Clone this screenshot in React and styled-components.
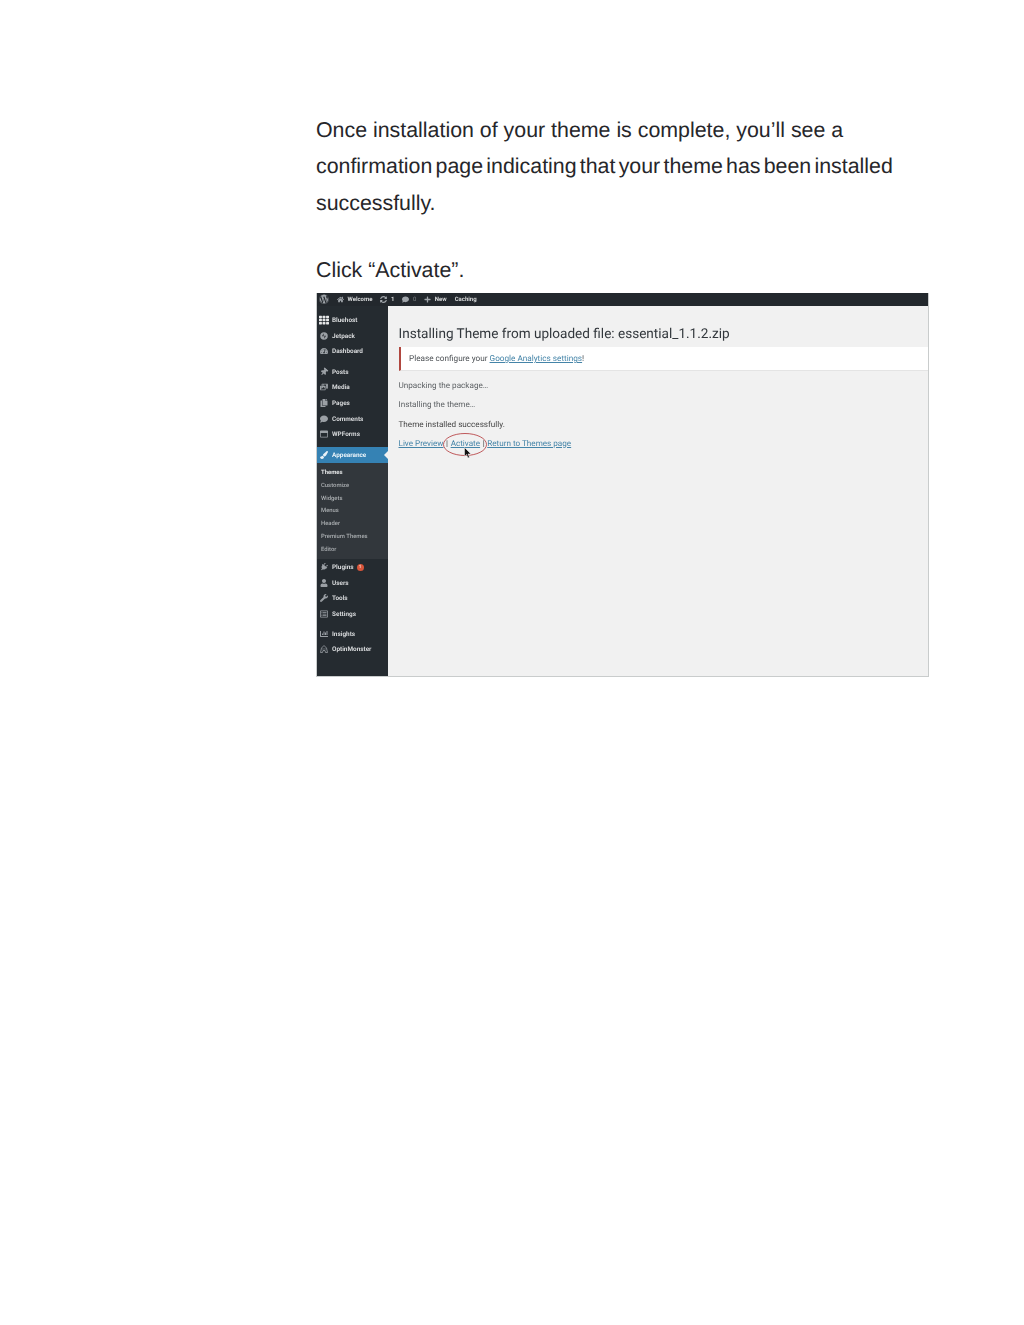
import React from "react";
import styled, { createGlobalStyle } from "styled-components";
import {
  FaWordpress,
  FaHome,
  FaSyncAlt,
  FaComment,
  FaPlus,
  FaTh,
  FaTachometerAlt,
  FaThumbtack,
  FaPhotoVideo,
  FaCopy,
  FaRegWindowMaximize,
  FaPaintBrush,
  FaPlug,
  FaUser,
  FaWrench,
  FaRegListAlt,
  FaChartBar,
} from "react-icons/fa";

const GlobalStyle = createGlobalStyle`
  html, body {
    margin: 0;
    padding: 0;
    background: #fff;
  }
`;

const Page = styled.div`
  width: 1024px;
  height: 1325px;
  box-sizing: border-box;
  padding: 111.9px 0 0 316px;
  overflow: hidden;
  text-rendering: geometricPrecision;
`;

const Line = styled.p`
  margin: 0;
  height: 36.5px;
  font: 21.36px/36.5px "Liberation Sans", Arial, sans-serif;
  color: #26262a;
  white-space: nowrap;
  word-spacing: ${(p) => p.$wordSpacing || "0"};
`;

const Spaced = styled(Line)`
  margin: 30.4px 0 4.7px;
`;

const Shot = styled.div`
  width: 613px;
  height: 384px;
  box-sizing: border-box;
  border: 1px solid #c9cccc;
  border-top: 0;
  display: flex;
  flex-direction: column;
  background: #f1f1f1;
  font-family: Roboto, "Liberation Sans", sans-serif;
  filter: blur(0.45px);
`;

const TopBar = styled.div`
  height: 13px;
  flex: none;
  background: #23282d;
  display: flex;
  align-items: center;
  gap: 8px;
  padding-left: 2px;
  color: #d8dadb;
  font-size: 6px;
  font-weight: 700;
`;

const TopItem = styled.span`
  display: flex;
  align-items: center;
  gap: 3.5px;
  svg {
    color: #a0a5aa;
    font-size: ${(p) => p.$icon || "7px"};
  }
`;

const Count = styled.span`
  color: ${(p) => (p.$dim ? "#7d8387" : "#d8dadb")};
  font-weight: 400;
`;

const Body = styled.div`
  flex: 1;
  display: flex;
  min-height: 0;
`;

const Sidebar = styled.div`
  width: 71px;
  flex: none;
  background: #252b30;
  padding-top: 6.3px;
  box-sizing: border-box;
`;

const Group = styled.div`
  margin-top: ${(p) => p.$top || "0"};
`;

const MenuRow = styled.div`
  position: relative;
  height: 15.6px;
  display: flex;
  align-items: center;
  padding-left: 3px;
  gap: 4px;
  font-size: 6.4px;
  font-weight: 700;
  color: ${(p) => (p.$active ? "#e8f2f8" : "#d6d8da")};
  background: ${(p) => (p.$active ? "#3582b4" : "transparent")};
  svg {
    width: 8px;
    height: 8px;
    flex: none;
    color: ${(p) => (p.$active ? "#e8f2f8" : "#9ba0a5")};
    transform: ${(p) => (p.$tilt ? "rotate(40deg)" : "none")};
  }
`;

const BluehostRow = styled(MenuRow)`
  padding-left: 2px;
  gap: 3px;
  svg {
    width: 10px;
    height: 10px;
    color: #e6e8e9;
  }
`;

const ActiveNotch = styled.span`
  position: absolute;
  right: 0;
  top: 4px;
  border: 4px solid transparent;
  border-right-color: #f1f1f1;
  border-left-width: 0;
`;

const SubMenu = styled.div`
  background: #32373c;
  padding: 4.2px 0 2.3px;
`;

const SubRow = styled.div`
  height: 12.9px;
  line-height: 12.9px;
  padding-left: 4px;
  font-size: 5.9px;
  font-weight: ${(p) => (p.$current ? 700 : 500)};
  color: ${(p) => (p.$current ? "#e4e6e7" : "#a9adb0")};
`;

const Badge = styled.span`
  width: 7px;
  height: 7px;
  margin-left: -1px;
  border-radius: 50%;
  background: #d8553a;
  color: #f6d9d0;
  font-size: 4.5px;
  line-height: 7px;
  text-align: center;
`;

const Content = styled.div`
  flex: 1;
  padding-top: 19px;
  color: #444;
`;

const Title = styled.h1`
  margin: 0 0 3px 10.5px;
  font-size: 13.57px;
  line-height: 19px;
  font-weight: 400;
  color: #32373c;
  white-space: nowrap;
`;

const Notice = styled.div`
  height: 24px;
  box-sizing: border-box;
  margin-left: 10.5px;
  padding: 1px 0 0 8.5px;
  display: flex;
  align-items: center;
  background: #fff;
  border-left: 2px solid #b0473f;
  border-bottom: 1px solid #e4e4e4;
  font-size: 8.2px;
  color: #4c5054;
`;

const Log = styled.div`
  margin: 9px 0 0 10.5px;
  display: flex;
  flex-direction: column;
  gap: 9.3px;
  font-size: 8.15px;
  line-height: 10px;
`;

const LogLine = styled.div`
  color: ${(p) => p.$color || "#5d6164"};
`;

const Anchor = styled.a`
  color: #4484a8;
  text-decoration: underline;
`;

const Links = styled.div`
  position: relative;
  display: flex;
  color: #444;
  white-space: nowrap;
`;

const Separator = styled.span`
  margin: 0 2.6px;
`;

const Circle = styled.svg`
  position: absolute;
  left: 43px;
  top: -6px;
  width: 46px;
  height: 25px;
`;

const Pointer = styled.svg`
  position: absolute;
  left: 65.5px;
  top: 9px;
  width: 8px;
  height: 12px;
`;

const JetpackIcon = () => (
  <svg viewBox="0 0 16 16">
    <circle cx="8" cy="8" r="7.5" fill="currentColor" />
    <path d="M7.3 2.5v6H4zM8.7 13.5v-6H12z" fill="#23282d" />
  </svg>
);

const MonsterIcon = () => (
  <svg viewBox="0 0 16 16">
    <path
      d="M1 15 3 6l5-5 5 5 2 9h-4l-1-4H6l-1 4z"
      fill="none"
      stroke="currentColor"
      strokeWidth="1.6"
    />
    <path d="M5 7h2v2H5zM9 7h2v2H9z" fill="currentColor" />
  </svg>
);

const top = [
  { label: "Jetpack", icon: JetpackIcon },
  { label: "Dashboard", icon: FaTachometerAlt },
];
const content = [
  { label: "Posts", icon: FaThumbtack, tilt: true },
  { label: "Media", icon: FaPhotoVideo },
  { label: "Pages", icon: FaCopy },
  { label: "Comments", icon: FaComment },
  { label: "WPForms", icon: FaRegWindowMaximize },
];
const subItems = ["Customize", "Widgets", "Menus", "Header", "Premium Themes", "Editor"];
const admin = [
  { label: "Users", icon: FaUser },
  { label: "Tools", icon: FaWrench },
  { label: "Settings", icon: FaRegListAlt },
];
const extras = [
  { label: "Insights", icon: FaChartBar },
  { label: "OptinMonster", icon: MonsterIcon },
];

const Rows = ({ items }) =>
  items.map(({ label, icon: Icon, tilt }) => (
    <MenuRow key={label} $tilt={tilt}>
      <Icon />
      {label}
    </MenuRow>
  ));

export default function App() {
  return (
    <>
      <GlobalStyle />
      <Page>
        <Line>Once installation of your theme is complete, you’ll see a</Line>
        <Line $wordSpacing="-2.7px">confirmation page indicating that your theme has been installed</Line>
        <Line>successfully.</Line>
        <Spaced>Click “Activate”.</Spaced>
        <Shot>
          <TopBar>
            <TopItem $icon="10px"><FaWordpress /></TopItem>
            <TopItem><FaHome />Welcome</TopItem>
            <TopItem><FaSyncAlt />1</TopItem>
            <TopItem><FaComment /><Count $dim>0</Count></TopItem>
            <TopItem><FaPlus />New</TopItem>
            <TopItem>Caching</TopItem>
          </TopBar>
          <Body>
            <Sidebar>
              <BluehostRow>
                <FaTh />
                Bluehost
              </BluehostRow>
              <Rows items={top} />
              <Group $top="5px"><Rows items={content} /></Group>
              <Group $top="5px">
                <MenuRow $active>
                  <FaPaintBrush />
                  Appearance
                  <ActiveNotch />
                </MenuRow>
                <SubMenu>
                  <SubRow $current>Themes</SubRow>
                  {subItems.map((item) => (
                    <SubRow key={item}>{item}</SubRow>
                  ))}
                </SubMenu>
              </Group>
              <MenuRow $tilt>
                <FaPlug />
                Plugins
                <Badge>1</Badge>
              </MenuRow>
              <Rows items={admin} />
              <Group $top="4.4px"><Rows items={extras} /></Group>
            </Sidebar>
            <Content>
              <Title>Installing Theme from uploaded file: essential_1.1.2.zip</Title>
              <Notice>
                <span>Please configure your <Anchor>Google Analytics settings</Anchor>!</span>
              </Notice>
              <Log>
                <LogLine>Unpacking the package…</LogLine>
                <LogLine>Installing the theme…</LogLine>
                <LogLine $color="#444">Theme installed successfully.</LogLine>
                <Links>
                  <Anchor>Live Preview</Anchor>
                  <Separator>|</Separator>
                  <Anchor>Activate</Anchor>
                  <Separator>|</Separator>
                  <Anchor>Return to Themes page</Anchor>
                  <Circle viewBox="0 0 46 25">
                    <ellipse cx="23" cy="12.5" rx="21.5" ry="11" fill="none" stroke="#b9474a" strokeWidth="0.9" />
                  </Circle>
                  <Pointer viewBox="0 0 8 12">
                    <path d="M0.5 0.5v9l2-2 1.5 3.5 1.5-.7-1.5-3.3h3z" fill="#111" stroke="#fff" strokeWidth="0.5" />
                  </Pointer>
                </Links>
              </Log>
            </Content>
          </Body>
        </Shot>
      </Page>
    </>
  );
}
